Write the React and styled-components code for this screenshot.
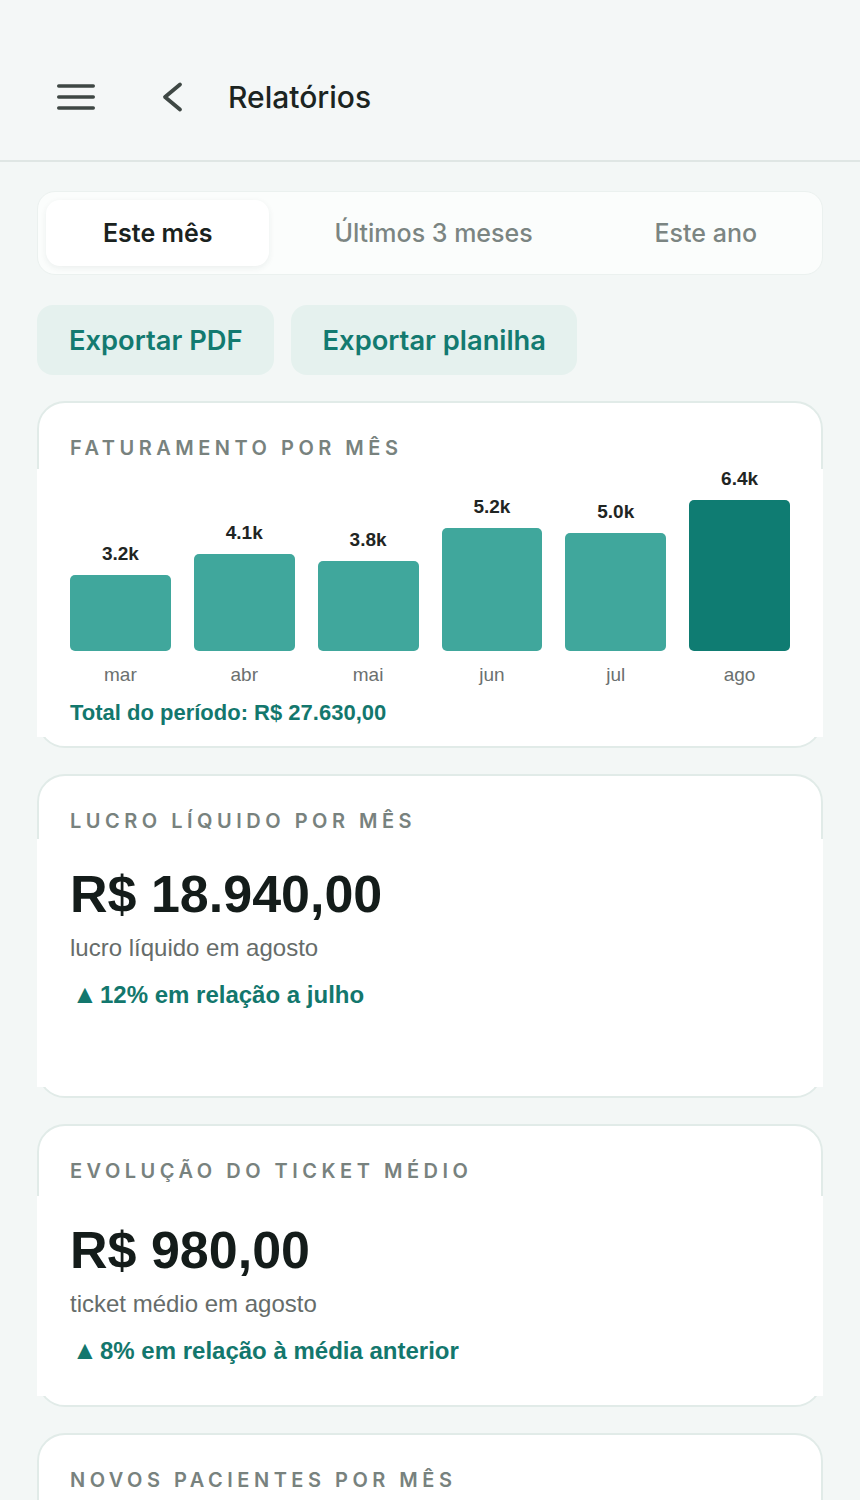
import React, { useState } from 'react';
import styled, { createGlobalStyle } from 'styled-components';

const GlobalStyle = createGlobalStyle`
  html, body {
    margin: 0;
    padding: 0;
    background: #f3f7f6;
  }
  * { box-sizing: border-box; }
  body {
    font-family: Inter, "Noto Sans", sans-serif;
    -webkit-font-smoothing: antialiased;
  }
`;

const Page = styled.div`
  min-height: 1500px;
  background: #f3f7f6;
`;

const Header = styled.header`
  display: flex;
  align-items: center;
  height: 162px;
  padding: 34px 0 0 57px;
  background: #f4f7f7;
  border-bottom: 2px solid #dfe6e4;
`;

const IconButton = styled.button`
  display: flex;
  align-items: center;
  justify-content: center;
  padding: 0;
  margin-right: ${(p) => p.$gap}px;
  border: none;
  background: transparent;
  color: #3e4744;
  cursor: pointer;
`;

const Title = styled.h1`
  margin: 0;
  font-size: 30px;
  font-weight: 500;
  color: #1b2421;
`;

const Content = styled.main`
  display: flex;
  flex-direction: column;
  padding: 29px 37px 0;
`;

const Tabs = styled.div`
  display: flex;
  gap: 8px;
  padding: 8px;
  background: #fbfdfc;
  border: 1px solid #ebf1ef;
  border-radius: 18px;
`;

const Tab = styled.button`
  flex: 1 1 auto;
  height: 66px;
  padding: 0;
  border: none;
  border-radius: 14px;
  font-family: Inter, sans-serif;
  font-size: 25px;
  font-weight: ${(p) => (p.$active ? 600 : 500)};
  color: ${(p) => (p.$active ? '#1a2220' : '#7b8582')};
  background: ${(p) => (p.$active ? '#ffffff' : 'transparent')};
  box-shadow: ${(p) => (p.$active ? '0 2px 6px rgba(30, 60, 50, 0.07)' : 'none')};
  cursor: pointer;
`;

const Actions = styled.div`
  display: flex;
  gap: 17px;
  margin: 30px 0 26px;
`;

const ActionButton = styled.button`
  height: 70px;
  padding: 0 31px 0 32px;
  border: none;
  border-radius: 16px;
  background: #e5f1ee;
  color: #137a70;
  font-family: Inter, sans-serif;
  font-size: 27.3px;
  font-weight: 600;
  cursor: pointer;
`;

const Card = styled.section`
  display: flex;
  flex-direction: column;
  min-height: ${(p) => p.$minHeight || 0}px;
  margin-bottom: 26px;
  padding: 33px 0 9px;
  background: #ffffff;
  border: 2px solid #e1ebe8;
  border-radius: 28px;
`;

const CardTitle = styled.h2`
  margin: 0 31px;
  font-family: Inter, sans-serif;
  font-size: 20px;
  line-height: 24px;
  font-weight: 600;
  letter-spacing: 4.5px;
  text-transform: uppercase;
  color: #78827e;
`;

const CardBody = styled.div`
  flex: 1;
  display: flex;
  flex-direction: column;
  margin: ${(p) => p.$top}px -2px 0;
  padding: ${(p) => p.$pt || 0}px 33px ${(p) => p.$bottom}px;
  background: #ffffff;
  font-family: "Liberation Sans", Arial, sans-serif;
`;

const Chart = styled.div`
  display: grid;
  grid-template-columns: repeat(6, 1fr);
  gap: 23px;
  align-items: end;
`;

const Column = styled.div`
  display: flex;
  flex-direction: column;
  align-items: center;
`;

const BarValue = styled.span`
  margin-bottom: 11px;
  font-size: 19px;
  line-height: 20px;
  font-weight: 700;
  color: #1f2523;
`;

const Bar = styled.div`
  width: 100%;
  border-radius: 5px;
  background: ${(p) => (p.$current ? '#0f7c72' : '#40a79c')};
`;

const BarLabel = styled.span`
  margin-top: 14px;
  font-size: 19px;
  line-height: 20px;
  color: #6b706f;
`;

const Total = styled.p`
  margin: 15px 0 0;
  font-size: 22px;
  line-height: 26px;
  font-weight: 700;
  color: #13776d;
`;

const BigValue = styled.p`
  margin: 0;
  font-size: 52px;
  line-height: 57px;
  font-weight: 700;
  color: #141c1a;
`;

const SubText = styled.p`
  margin: 10px 0 0;
  font-size: 24px;
  line-height: 30px;
  color: #666c6a;
`;

const Change = styled.p`
  display: flex;
  align-items: baseline;
  margin: 17px 0 0;
  font-size: 24px;
  line-height: 30px;
  font-weight: 700;
  color: #13776d;
`;

const Arrow = styled.span`
  flex: none;
  width: 30px;
  padding-left: 2px;
  font-size: 26px;
  line-height: 24px;
`;

const MenuIcon = () => (
  <svg width="38" height="26" viewBox="0 0 38 26" fill="none" stroke="currentColor" strokeWidth="3.4" strokeLinecap="round">
    <line x1="1.7" y1="2" x2="36.3" y2="2" />
    <line x1="1.7" y1="13" x2="36.3" y2="13" />
    <line x1="1.7" y1="24" x2="36.3" y2="24" />
  </svg>
);

const BackIcon = () => (
  <svg width="24" height="32" viewBox="0 0 24 32" fill="none" stroke="currentColor" strokeWidth="3.8" strokeLinecap="round" strokeLinejoin="round">
    <polyline points="20,3.5 5,16 20,28.5" />
  </svg>
);

const revenue = [
  { month: 'mar', value: 3.2 },
  { month: 'abr', value: 4.1 },
  { month: 'mai', value: 3.8 },
  { month: 'jun', value: 5.2 },
  { month: 'jul', value: 5.0 },
  { month: 'ago', value: 6.4 },
];

const tabs = ['Este mês', 'Últimos 3 meses', 'Este ano'];

export default function App() {
  const [tab, setTab] = useState(0);
  const max = Math.max(...revenue.map((r) => r.value));

  return (
    <Page>
      <GlobalStyle />
      <Header>
        <IconButton $gap={65} aria-label="Menu">
          <MenuIcon />
        </IconButton>
        <IconButton $gap={44} aria-label="Voltar">
          <BackIcon />
        </IconButton>
        <Title>Relatórios</Title>
      </Header>

      <Content>
        <Tabs>
          {tabs.map((t, i) => (
            <Tab key={t} $active={tab === i} onClick={() => setTab(i)}>
              {t}
            </Tab>
          ))}
        </Tabs>

        <Actions>
          <ActionButton>Exportar PDF</ActionButton>
          <ActionButton>Exportar planilha</ActionButton>
        </Actions>

        <Card>
          <CardTitle>Faturamento por mês</CardTitle>
          <CardBody $top={9} $bottom={11}>
            <Chart>
              {revenue.map((r, i) => (
                <Column key={r.month}>
                  <BarValue>{r.value.toFixed(1)}k</BarValue>
                  <Bar
                    $current={i === revenue.length - 1}
                    style={{ height: Math.round((r.value / max) * 151) }}
                  />
                  <BarLabel>{r.month}</BarLabel>
                </Column>
              ))}
            </Chart>
            <Total>Total do período: R$ 27.630,00</Total>
          </CardBody>
        </Card>

        <Card $minHeight={324}>
          <CardTitle>Lucro líquido por mês</CardTitle>
          <CardBody $top={6} $pt={27} $bottom={30}>
            <BigValue>R$ 18.940,00</BigValue>
            <SubText>lucro líquido em agosto</SubText>
            <Change>
              <Arrow>▲</Arrow>12% em relação a julho
            </Change>
          </CardBody>
        </Card>

        <Card>
          <CardTitle>Evolução do ticket médio</CardTitle>
          <CardBody $top={13} $pt={26} $bottom={30}>
            <BigValue>R$ 980,00</BigValue>
            <SubText>ticket médio em agosto</SubText>
            <Change>
              <Arrow>▲</Arrow>8% em relação à média anterior
            </Change>
          </CardBody>
        </Card>

        <Card>
          <CardTitle>Novos pacientes por mês</CardTitle>
          <CardBody $top={13} $pt={26} $bottom={30}>
            <BigValue>24</BigValue>
          </CardBody>
        </Card>
      </Content>
    </Page>
  );
}
